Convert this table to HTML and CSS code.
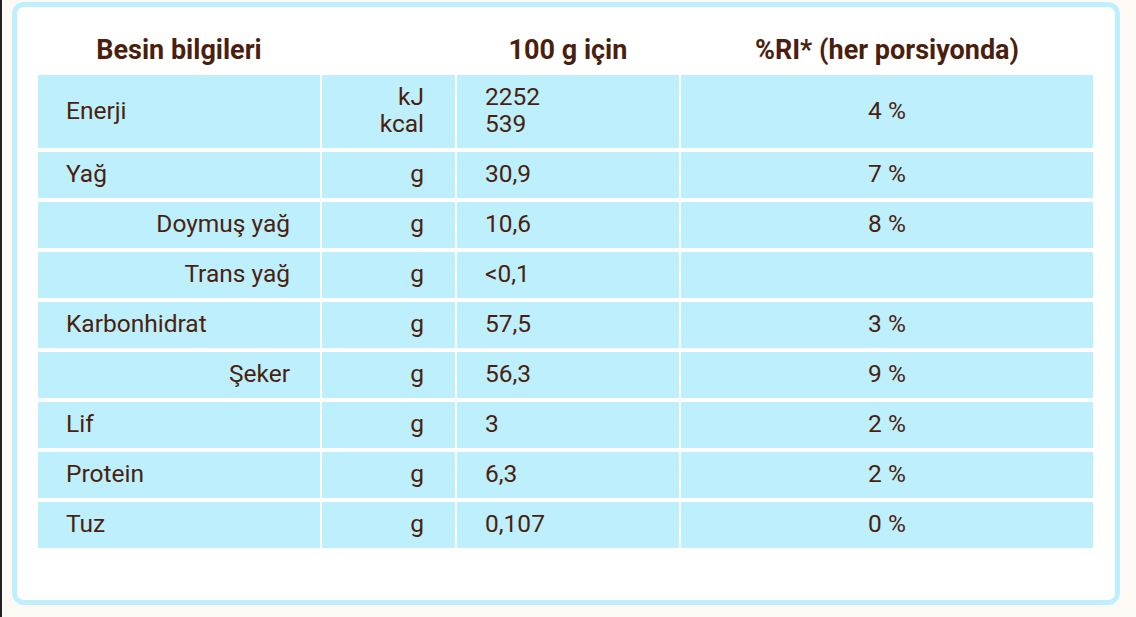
FILE: index.html
```html
<!DOCTYPE html>
<html lang="tr">
<head>
<meta charset="utf-8">
<title>Besin bilgileri</title>
<link rel="stylesheet" href="styles.css">
</head>
<body>
<div class="card">
  <div class="table">
    <div class="th">Besin bilgileri</div>
    <div class="th"></div>
    <div class="th">100 g için</div>
    <div class="th">%RI* (her porsiyonda)</div>

    <div class="td name tall">Enerji</div>
    <div class="td unit tall">kJ<br>kcal</div>
    <div class="td val tall">2252<br>539</div>
    <div class="td ri tall">4 %</div>

    <div class="td name">Yağ</div>
    <div class="td unit">g</div>
    <div class="td val">30,9</div>
    <div class="td ri">7 %</div>

    <div class="td name sub">Doymuş yağ</div>
    <div class="td unit">g</div>
    <div class="td val">10,6</div>
    <div class="td ri">8 %</div>

    <div class="td name sub">Trans yağ</div>
    <div class="td unit">g</div>
    <div class="td val">&lt;0,1</div>
    <div class="td ri"></div>

    <div class="td name">Karbonhidrat</div>
    <div class="td unit">g</div>
    <div class="td val">57,5</div>
    <div class="td ri">3 %</div>

    <div class="td name sub">Şeker</div>
    <div class="td unit">g</div>
    <div class="td val">56,3</div>
    <div class="td ri">9 %</div>

    <div class="td name">Lif</div>
    <div class="td unit">g</div>
    <div class="td val">3</div>
    <div class="td ri">2 %</div>

    <div class="td name">Protein</div>
    <div class="td unit">g</div>
    <div class="td val">6,3</div>
    <div class="td ri">2 %</div>

    <div class="td name">Tuz</div>
    <div class="td unit">g</div>
    <div class="td val">0,107</div>
    <div class="td ri">0 %</div>
  </div>
</div>
</body>
</html>
```
FILE: styles.css
```css
html, body {
  margin: 0;
  padding: 0;
}
body {
  background: #fdfaf6;
  border-left: 2px solid #222;
  height: 617px;
  box-sizing: border-box;
  padding: 2px 0 0 10px;
  font-family: Roboto, "Liberation Sans", sans-serif;
  color: #4b1f0e;
  overflow: hidden;
}
.card {
  width: 1108px;
  height: 603px;
  box-sizing: border-box;
  border: 5px solid #bdeffd;
  border-radius: 12px;
  background: #fff;
  padding: 0 22px 0 21px;
}
.table {
  display: grid;
  grid-template-columns: 282px 133px 222px 412px;
  grid-template-rows: 64px 73px repeat(8, 46px);
  column-gap: 2px;
  row-gap: 4px;
}
.th {
  display: flex;
  align-items: flex-end;
  justify-content: center;
  padding-bottom: 5px;
  font-size: 27px;
  font-weight: 700;
  line-height: 32px;
  white-space: nowrap;
}
.td {
  background: #bdeffd;
  display: flex;
  align-items: center;
  padding-bottom: 3px;
  box-sizing: border-box;
  font-size: 24.5px;
  line-height: 27px;
  white-space: nowrap;
}
.name {
  padding-left: 28px;
}
.name.sub {
  justify-content: flex-end;
  padding-left: 0;
  padding-right: 30px;
}
.unit {
  justify-content: flex-end;
  text-align: right;
  padding-right: 31px;
}
.val {
  padding-left: 28px;
}
.ri {
  justify-content: center;
}
```
